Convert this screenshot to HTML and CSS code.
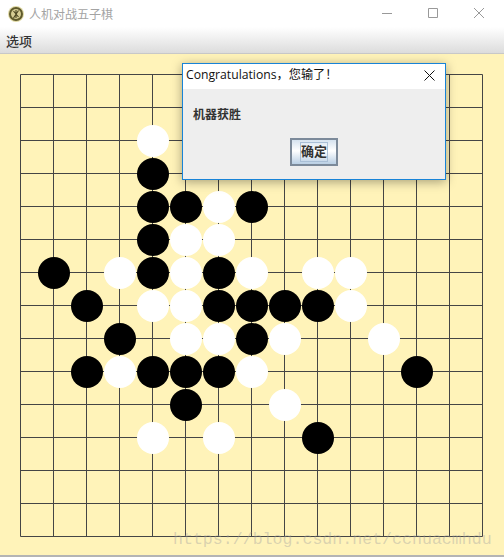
FILE: index.html
```html
<!DOCTYPE html>
<html lang="zh-CN">
<head>
    <meta charset="UTF-8">
    <title>人机对战五子棋</title>
    <link rel="stylesheet" href="styles.css">
</head>
<body>
<div class="window">
    <div class="title-bar">
        <svg class="app-icon" width="16" height="16" viewBox="0 0 16 16">
            <circle cx="8" cy="8" r="8" fill="#e0d9a4"/>
            <circle cx="8" cy="8" r="7" fill="#5f5a2c"/>
            <circle cx="8" cy="8" r="5" fill="#d6cd94"/>
            <path d="M5.5 5l5 6M10.5 4.5L5.5 12M8 4v8" stroke="#4a4520" stroke-width="1.1" fill="none"/>
        </svg>
        <span class="app-title">人机对战五子棋</span>
        <div class="win-controls">
            <svg class="win-btn" width="46" height="27" viewBox="0 0 46 27"><path d="M18 13.5h10" stroke="#999"/></svg>
            <svg class="win-btn" width="46" height="27" viewBox="0 0 46 27"><path d="M18.5 8.5h9v9h-9z" stroke="#999" fill="none"/></svg>
            <svg class="win-btn" width="46" height="27" viewBox="0 0 46 27"><path d="M18 8l10 10M28 8L18 18" stroke="#999" fill="none"/></svg>
        </div>
    </div>
    <div class="menu-bar"><span class="menu-item">选项</span></div>
    <div class="board-area">
        <svg class="board" width="464" height="464" viewBox="19 73 464 464">
            <path class="grid" d="M20.5 74.5V536.5M53.5 74.5V536.5M86.5 74.5V536.5M119.5 74.5V536.5M152.5 74.5V536.5M185.5 74.5V536.5M218.5 74.5V536.5M251.5 74.5V536.5M284.5 74.5V536.5M317.5 74.5V536.5M350.5 74.5V536.5M383.5 74.5V536.5M416.5 74.5V536.5M449.5 74.5V536.5M482.5 74.5V536.5
                M20.5 74.5H482.5M20.5 107.5H482.5M20.5 140.5H482.5M20.5 173.5H482.5M20.5 206.5H482.5M20.5 239.5H482.5M20.5 272.5H482.5M20.5 305.5H482.5M20.5 338.5H482.5M20.5 371.5H482.5M20.5 404.5H482.5M20.5 437.5H482.5M20.5 470.5H482.5M20.5 503.5H482.5M20.5 536.5H482.5"/>
            <g class="black">
                <circle cx="153" cy="174" r="16"/>
                <circle cx="153" cy="207" r="16"/>
                <circle cx="186" cy="207" r="16"/>
                <circle cx="252" cy="207" r="16"/>
                <circle cx="153" cy="240" r="16"/>
                <circle cx="54" cy="273" r="16"/>
                <circle cx="153" cy="273" r="16"/>
                <circle cx="219" cy="273" r="16"/>
                <circle cx="87" cy="306" r="16"/>
                <circle cx="219" cy="306" r="16"/>
                <circle cx="252" cy="306" r="16"/>
                <circle cx="285" cy="306" r="16"/>
                <circle cx="318" cy="306" r="16"/>
                <circle cx="120" cy="339" r="16"/>
                <circle cx="252" cy="339" r="16"/>
                <circle cx="87" cy="372" r="16"/>
                <circle cx="153" cy="372" r="16"/>
                <circle cx="186" cy="372" r="16"/>
                <circle cx="219" cy="372" r="16"/>
                <circle cx="417" cy="372" r="16"/>
                <circle cx="186" cy="405" r="16"/>
                <circle cx="318" cy="438" r="16"/>
            </g>
            <g class="white">
                <circle cx="153" cy="141" r="16"/>
                <circle cx="219" cy="207" r="16"/>
                <circle cx="186" cy="240" r="16"/>
                <circle cx="219" cy="240" r="16"/>
                <circle cx="120" cy="273" r="16"/>
                <circle cx="186" cy="273" r="16"/>
                <circle cx="252" cy="273" r="16"/>
                <circle cx="318" cy="273" r="16"/>
                <circle cx="351" cy="273" r="16"/>
                <circle cx="153" cy="306" r="16"/>
                <circle cx="186" cy="306" r="16"/>
                <circle cx="351" cy="306" r="16"/>
                <circle cx="186" cy="339" r="16"/>
                <circle cx="219" cy="339" r="16"/>
                <circle cx="285" cy="339" r="16"/>
                <circle cx="384" cy="339" r="16"/>
                <circle cx="120" cy="372" r="16"/>
                <circle cx="252" cy="372" r="16"/>
                <circle cx="285" cy="405" r="16"/>
                <circle cx="153" cy="438" r="16"/>
                <circle cx="219" cy="438" r="16"/>
            </g>
        </svg>
    </div>
</div>

<div class="dialog">
    <div class="dialog-title">
        <span class="dialog-caption">Congratulations，您输了！</span>
        <svg width="11" height="11" viewBox="0 0 11 11"><path d="M.5.5l10 10M10.5.5l-10 10" stroke="#111" fill="none"/></svg>
    </div>
    <div class="dialog-body">
        <p class="dialog-msg">机器获胜</p>
        <div class="dialog-actions">
            <button type="button" class="ok-btn"><span>确定</span></button>
        </div>
    </div>
</div>

<div class="watermark">https://blog.csdn.net/ccnuacmhdu</div>
</body>
</html>
```

FILE: styles.css
```css
* { box-sizing: border-box; margin: 0; padding: 0; }
html, body { width: 504px; height: 557px; overflow: hidden; background: #fff; }
body {
    font-family: "Noto Sans CJK SC", "Noto Sans", sans-serif;
    position: relative;
}
.window {
    display: flex;
    flex-direction: column;
    height: 557px;
    border-bottom: 2px solid #b4b4b4;
}
.title-bar {
    display: flex;
    align-items: center;
    height: 27px;
    flex: none;
    padding-left: 8px;
    background: #fff;
}
.app-icon { flex: none; }
.app-title {
    margin-left: 5px;
    font-size: 12px;
    color: #a3a3a3;
}
.win-controls { display: flex; margin-left: auto; margin-right: 2px; }
.win-btn { display: block; }
.menu-bar {
    flex: none;
    height: 27px;
    display: flex;
    align-items: center;
    padding-left: 6px;
    background: linear-gradient(#fff, #dcdcdc);
    border-bottom: 1px solid #c8c8c8;
}
.menu-item { font-size: 13px; font-weight: 500; color: #333; }
.board-area {
    flex: 1;
    padding: 19px 0 0 19px;
    background: #fff3b9;
}
.board { display: block; }
.grid { stroke: #454545; fill: none; }
.black { fill: #000; }
.white { fill: #fff; }

.dialog {
    position: absolute;
    left: 182px;
    top: 63px;
    width: 264px;
    height: 117px;
    border: 1px solid #1883d7;
    background: #eee;
    box-shadow: 0 2px 10px rgba(0, 0, 0, 0.35);
}
.dialog-title {
    display: flex;
    align-items: center;
    justify-content: space-between;
    height: 25px;
    padding: 0 10px 2px 3px;
    background: #fff;
    font-family: "Open Sans", "Noto Sans CJK SC", sans-serif;
    font-size: 12.2px;
    color: #111;
}
.dialog-caption { line-height: 17px; margin-top: -2px; }
.dialog-body { padding: 16px 10px 0; }
.dialog-msg { font-size: 12px; font-weight: 700; color: #333; line-height: 18px; }
.dialog-actions { display: flex; justify-content: center; margin-top: 15px; }
.ok-btn {
    display: flex;
    align-items: center;
    justify-content: center;
    width: 48px;
    height: 28px;
    border: 2px solid #7c8a9a;
    background: linear-gradient(#d5e2ef, #fff 45%, #b9cfe4);
    font-family: inherit;
    font-size: 13px;
    font-weight: 700;
    color: #333;
}
.ok-btn span {
    width: 28px;
    height: 20px;
    border: 1px solid #a9bfd6;
    line-height: 15px;
    white-space: nowrap;
}
.watermark {
    position: absolute;
    left: 173px;
    top: 530px;
    font-family: "Liberation Mono", monospace;
    font-size: 16.6px;
    color: rgba(160, 160, 160, 0.4);
    white-space: nowrap;
}
```
